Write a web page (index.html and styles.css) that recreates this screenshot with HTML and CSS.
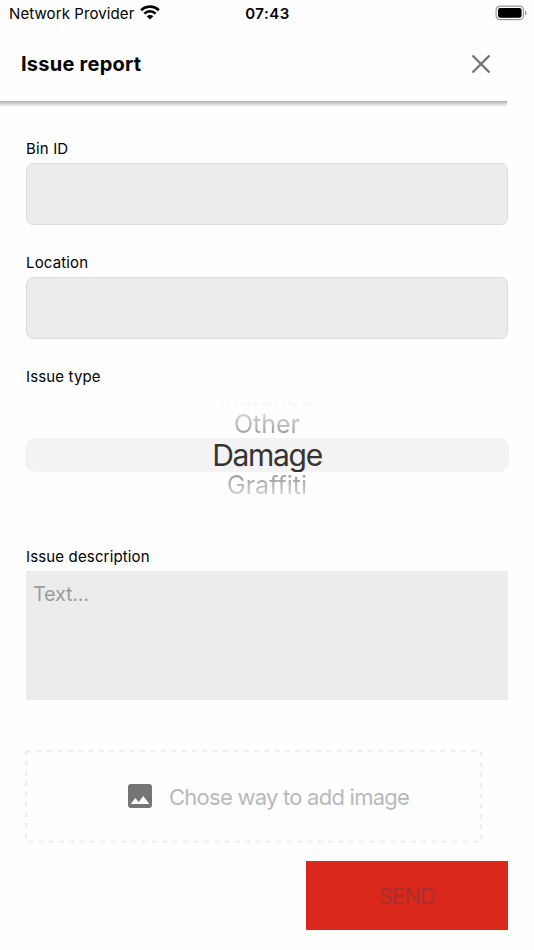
FILE: index.html
```
<!DOCTYPE html>
<html lang="en">
<head>
    <meta charset="UTF-8">
    <meta name="viewport" content="width=device-width, initial-scale=1.0">
    <title>Issue report</title>
    <link rel="stylesheet" href="styles.css">
</head>
<body>
    <div class="status-bar">
        <div class="carrier">
            <span>Network Provider</span>
            <svg class="wifi" width="20" height="15" viewBox="0 0 20 15">
                <path d="M1.2 5.2a12.6 12.6 0 0 1 17.6 0" fill="none" stroke="#000" stroke-width="2.8"/>
                <path d="M4.4 8.6a8 8 0 0 1 11.2 0" fill="none" stroke="#000" stroke-width="2.5"/>
                <path d="M10 14.6L6.7 11.3a4.7 4.7 0 0 1 6.6 0z"/>
            </svg>
        </div>
        <span class="time">07:43</span>
        <svg class="battery" width="32" height="16" viewBox="0 0 32 16">
            <rect x="1.1" y="1.1" width="27.4" height="13.6" rx="4" fill="none" stroke="#999" stroke-width="1.2"/>
            <rect x="3" y="3" width="23.6" height="9.8" rx="2.2"/>
            <path d="M30 5.5a2.6 2.6 0 0 1 0 4.8z" fill="#999"/>
        </svg>
    </div>
    <header class="header">
        <h1>Issue report</h1>
        <svg class="close" width="20" height="20" viewBox="0 0 20 20">
            <path d="M1.5 1.5l17 17M18.5 1.5l-17 17" stroke="#757575" stroke-width="2.4"/>
        </svg>
    </header>
    <div class="header-shadow"></div>
    <form class="form">
        <label for="bin">Bin ID</label>
        <input type="text" id="bin">
        <label for="location">Location</label>
        <input type="text" id="location">
        <label>Issue type</label>
        <div class="picker">
            <div class="option far"><span>Installed</span></div>
            <div class="option above"><span>Other</span></div>
            <div class="option selected"><span>Damage</span></div>
            <div class="option below"><span>Graffiti</span></div>
        </div>
        <label for="description">Issue description</label>
        <textarea id="description" placeholder="Text..."></textarea>
        <div class="upload">
            <svg class="upload-border" width="458" height="93" viewBox="0 0 458 93">
                <rect x="1.2" y="1.2" width="455" height="90.4" fill="none" stroke="#efefef" stroke-width="2.4" stroke-dasharray="5.2 5.15"/>
            </svg>
            <svg class="upload-icon" width="24" height="24" viewBox="3 3 18 18">
                <path fill="#757575" d="M21 19V5c0-1.1-.9-2-2-2H5c-1.1 0-2 .9-2 2v14c0 1.1.9 2 2 2h14c1.1 0 2-.9 2-2zM8.5 13.5l2.5 3.01L14.5 12l4.500 6H5l3.500-4.500z"/>
            </svg>
            <span>Chose way to add image</span>
        </div>
        <button type="button" class="send"><span>SEND</span></button>
    </form>
</body>
</html>
```
FILE: styles.css
```
* {
    box-sizing: border-box;
}
body {
    margin: 0;
    height: 950px;
    overflow: hidden;
    background: #fefefe;
    font-family: Inter, sans-serif;
    color: #000;
}
.status-bar {
    display: grid;
    grid-template-columns: 1fr auto 1fr;
    align-items: center;
    height: 27px;
    padding: 0 7px 0 9px;
    font-size: 15px;
}
.carrier {
    display: flex;
    align-items: center;
    gap: 6px;
    white-space: nowrap;
    letter-spacing: 0.1px;
}
.wifi {
    margin-top: -2px;
}
.time {
    margin-right: 1px;
    font-weight: 600;
    letter-spacing: 0.5px;
}
.battery {
    justify-self: end;
    margin-top: -1px;
}
.header {
    display: flex;
    align-items: center;
    justify-content: space-between;
    height: 74px;
    padding: 0 43px 0 21px;
}
.header h1 {
    margin: 0;
    font-size: 20px;
    font-weight: 700;
    letter-spacing: 0.25px;
}
.close {
    margin-top: -1px;
}
.header-shadow {
    width: 507px;
    height: 6px;
    background: linear-gradient(#b0b0b0, #fefefe);
}
.form {
    display: flex;
    flex-direction: column;
    padding: 32px 26px 0;
}
.form label {
    height: 24px;
    line-height: 20px;
    font-size: 15px;
    letter-spacing: 0.15px;
}
.form input {
    height: 62px;
    margin: 0 0 28px;
    border: 1px solid #dcdcdc;
    border-radius: 7px;
    background: #ececec;
}
.picker {
    margin: 10px -1px 49px;
    color: #343434;
}
.option {
    display: flex;
    justify-content: center;
    align-items: center;
    overflow: hidden;
}
.far {
    align-items: flex-end;
    height: 6px;
    font-size: 23px;
    line-height: 18px;
    letter-spacing: 0.6px;
    color: #f7f7f7;
}
.above {
    height: 31px;
    padding-top: 3px;
    font-size: 25px;
    line-height: 28px;
    color: transparent;
    background: linear-gradient(#d4d4d4 20%, #a2a2a2 85%) text;
}
.selected {
    height: 34px;
    border-radius: 10px;
    background: #f3f3f3;
    font-size: 30px;
    line-height: 34px;
    letter-spacing: -1.3px;
}
.below {
    height: 26px;
    padding-top: 1px;
    font-size: 25px;
    line-height: 25px;
    color: transparent;
    background: linear-gradient(#a2a2a2 20%, #d8d8d8 95%) text;
}
.form textarea {
    height: 129px;
    margin: 0;
    padding: 11px 7px;
    border: none;
    resize: none;
    background: #ececec;
    font-family: inherit;
    font-size: 20px;
    letter-spacing: -0.3px;
}
.form textarea::placeholder {
    color: #9c9c9c;
}
.upload {
    position: relative;
    display: flex;
    align-items: center;
    gap: 17px;
    width: 458px;
    height: 93px;
    margin: 50px 0 0 -1px;
    padding-left: 103px;
    font-size: 22px;
    letter-spacing: -0.75px;
    color: #b9b9b9;
}
.upload-border {
    position: absolute;
    left: 0;
    top: 0;
}
.upload-icon {
    margin-top: -2px;
}
.send {
    align-self: flex-end;
    width: 202px;
    height: 69px;
    margin-top: 18px;
    border: none;
    background: #da291c;
    font-family: inherit;
    font-size: 22px;
    letter-spacing: -0.9px;
    color: #a8302b;
}
```
